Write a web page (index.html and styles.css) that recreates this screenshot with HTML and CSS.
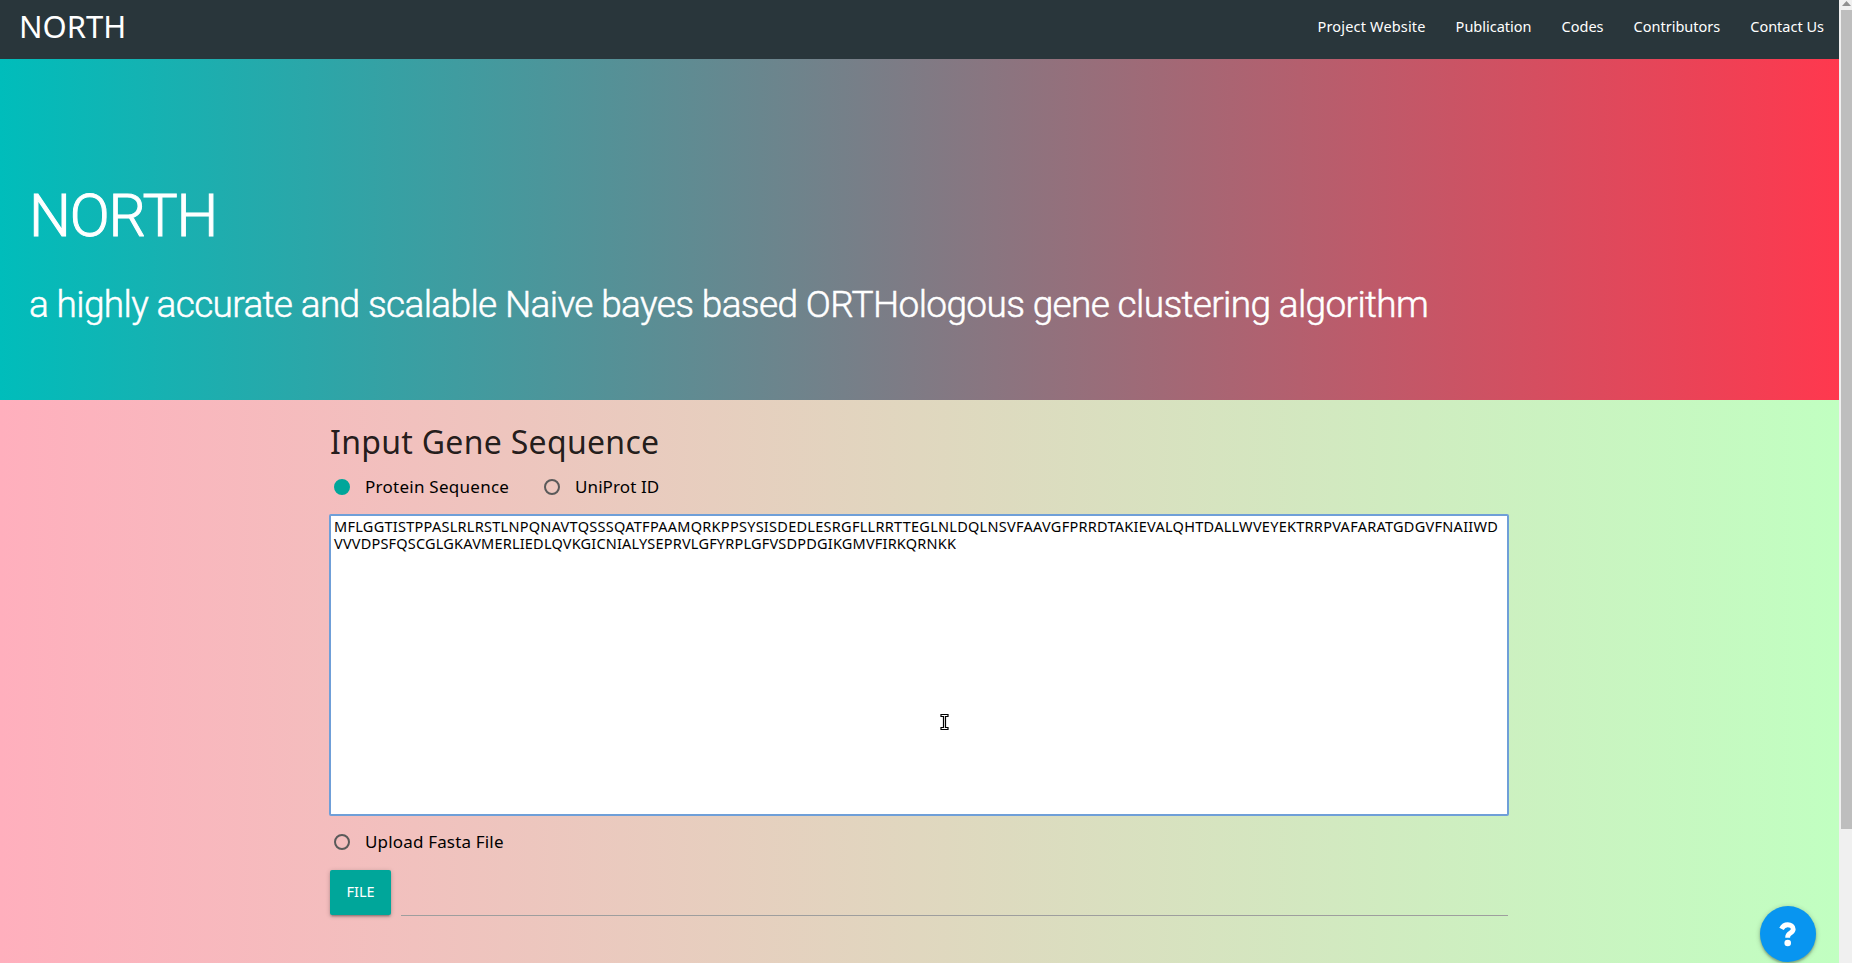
FILE: index.html
```html
<!DOCTYPE html>
<html lang="en">
<head>
<meta charset="utf-8">
<title>NORTH</title>
<link rel="stylesheet" href="styles.css">
</head>
<body>
<div class="window">
  <div class="page">
    <header class="navbar">
      <a class="brand">NORTH</a>
      <nav class="links">
        <a class="l1">Project Website</a>
        <a class="l2">Publication</a>
        <a class="l3">Codes</a>
        <a class="l4">Contributors</a>
        <a class="l5">Contact Us</a>
      </nav>
    </header>
    <section class="hero">
      <h1 class="title"><span>NORTH</span></h1>
      <p class="subtitle"><span>a highly accurate and scalable Naive bayes based ORTHologous gene clustering algorithm</span></p>
    </section>
    <main class="content">
      <h4 class="heading"><span>Input Gene Sequence</span></h4>
      <div class="options">
        <label class="radio first"><i class="dot checked"></i><span class="protein">Protein Sequence</span></label>
        <label class="radio"><i class="dot"></i><span class="uniprot">UniProt ID</span></label>
      </div>
      <div class="sequence"><span class="s1">MFLGGTISTPPASLRLRSTLNPQNAVTQSSSQATFPAAMQRKPPSYSISDEDLESRGFLLRRTTEGLNLDQLNSVFAAVGFPRRDTAKIEVALQHTDALLWVEYEKTRRPVAFARATGDGVFNAIIWD</span><br><span class="s2">VVVDPSFQSCGLGKAVMERLIEDLQVKGICNIALYSEPRVLGFYRPLGFVSDPDGIKGMVFIRKQRNKK</span></div>
      <label class="radio upload"><i class="dot"></i><span class="fasta">Upload Fasta File</span></label>
      <div class="file-row">
        <button class="file-btn"><span>FILE</span></button>
        <div class="file-path"></div>
      </div>
    </main>
  </div>
  <div class="scrollbar">
    <svg class="arrow" width="9" height="5" viewBox="0 0 9 5"><path d="M4.5 0 9 5H0z" fill="#909090"/></svg>
    <div class="thumb"></div>
  </div>
  <button class="help" aria-label="Help">
    <svg width="18" height="26" viewBox="0 0 18 26"><path d="M2.5 6.900C4 4 6.100 2.800 8.700 2.800c3.100 0 5.500 1.700 5.500 4.400 0 4-5.500 3.800-5.500 7.800v.8" fill="none" stroke="#fff" stroke-width="4.9"/><circle cx="8.7" cy="21" r="3.300" fill="#fff"/></svg>
  </button>
  <svg class="cursor" width="9" height="18" viewBox="0 0 9 18"><path d="M1 1.500h7v2H5.500v11H8v2H1v-2h2.500v-11H1z" fill="#fff" stroke="#000" stroke-width="1.200"/></svg>
</div>
</body>
</html>
```
FILE: styles.css
```css
* { box-sizing: border-box; }
body { margin: 0; font-family: "Noto Sans", sans-serif; color: #000; }
.window { position: relative; display: flex; width: 1852px; height: 963px; overflow: hidden; }
.page { width: 1839px; height: 963px; background: linear-gradient(to right, #ffafbd, #c1ffc1); }
span, a { white-space: nowrap; }

.navbar { height: 59px; background: #29363b; color: #fff; display: flex; justify-content: space-between; padding: 0 15px 0 19px; }
.brand { font-size: 31px; line-height: 52px; }
.links { display: flex; gap: 30px; font-size: 14.5px; line-height: 52px; }
.l1 { letter-spacing: 0.17px; }

.hero { height: 341px; padding: 114px 29px 0; color: #fff; background: linear-gradient(to right, #00bdbb, #ff384e); font-family: Roboto, sans-serif; font-weight: 300; -webkit-text-stroke: 0.5px #fff; }
.title { margin: 0; font-size: 59px; line-height: 86px; font-weight: 300; letter-spacing: -1.2px; -webkit-text-stroke: 1px #fff; }
.subtitle { margin: 18px 0 0; font-size: 37px; line-height: 56px; letter-spacing: -0.64px; }

.content { width: 1179px; margin-left: 330px; padding-top: 22px; }
.heading { margin: 0; font-size: 32px; line-height: 40px; font-weight: 400; letter-spacing: 0.3px; color: rgba(0, 0, 0, 0.87); }
.options { display: flex; margin-top: 12px; }
.radio { display: flex; align-items: center; height: 26px; padding-left: 4px; font-size: 17px; line-height: 26px; }
.first { width: 210px; }
.dot { width: 16px; height: 16px; margin-right: 15px; border: 2px solid #5a5a5a; border-radius: 50%; }
.checked { border-color: #00a69a; background: #00a69a; }
.protein { letter-spacing: 0.26px; }
.uniprot { letter-spacing: 0.1px; }
.fasta { letter-spacing: 0.17px; }
.sequence { width: 1180px; height: 302px; margin: 14px 0 0 -1px; padding: 2px 2px 2px 3px; background: #fff; border: 2px solid #6f9fd8; border-radius: 2px; font-size: 14.5px; line-height: 17px; }
.s1 { letter-spacing: 0.272px; }
.s2 { letter-spacing: 0.2px; }
.upload { margin-top: 13px; }
.file-row { display: flex; gap: 10px; width: 1178px; margin-top: 15px; height: 45px; }
.file-btn { width: 61px; padding: 0 0 3px; border: 0; border-radius: 2px; background: #00a69a; color: #fff; font: 14.5px "Noto Sans", sans-serif; box-shadow: 0 2px 2px rgba(0,0,0,.14), 0 3px 1px -2px rgba(0,0,0,.12), 0 1px 5px rgba(0,0,0,.2); }
.file-path { flex: 1; height: 46px; border-bottom: 1px solid #9e9e9e; }

.scrollbar { width: 13px; padding: 1px 0 0 2px; background: #f0f0f0; }
.arrow { display: block; margin-left: 1px; }
.thumb { height: 819px; margin-top: 4px; background: #bebebe; }
.help { position: absolute; left: 1760px; top: 906px; width: 56px; height: 56px; padding: 1px 0 0; border: 0; border-radius: 50%; background: #0895f0; display: flex; align-items: center; justify-content: center; box-shadow: 0 2px 2px rgba(0,0,0,.2), 0 1px 5px rgba(0,0,0,.25); }
.cursor { position: absolute; left: 940px; top: 713px; }
```
